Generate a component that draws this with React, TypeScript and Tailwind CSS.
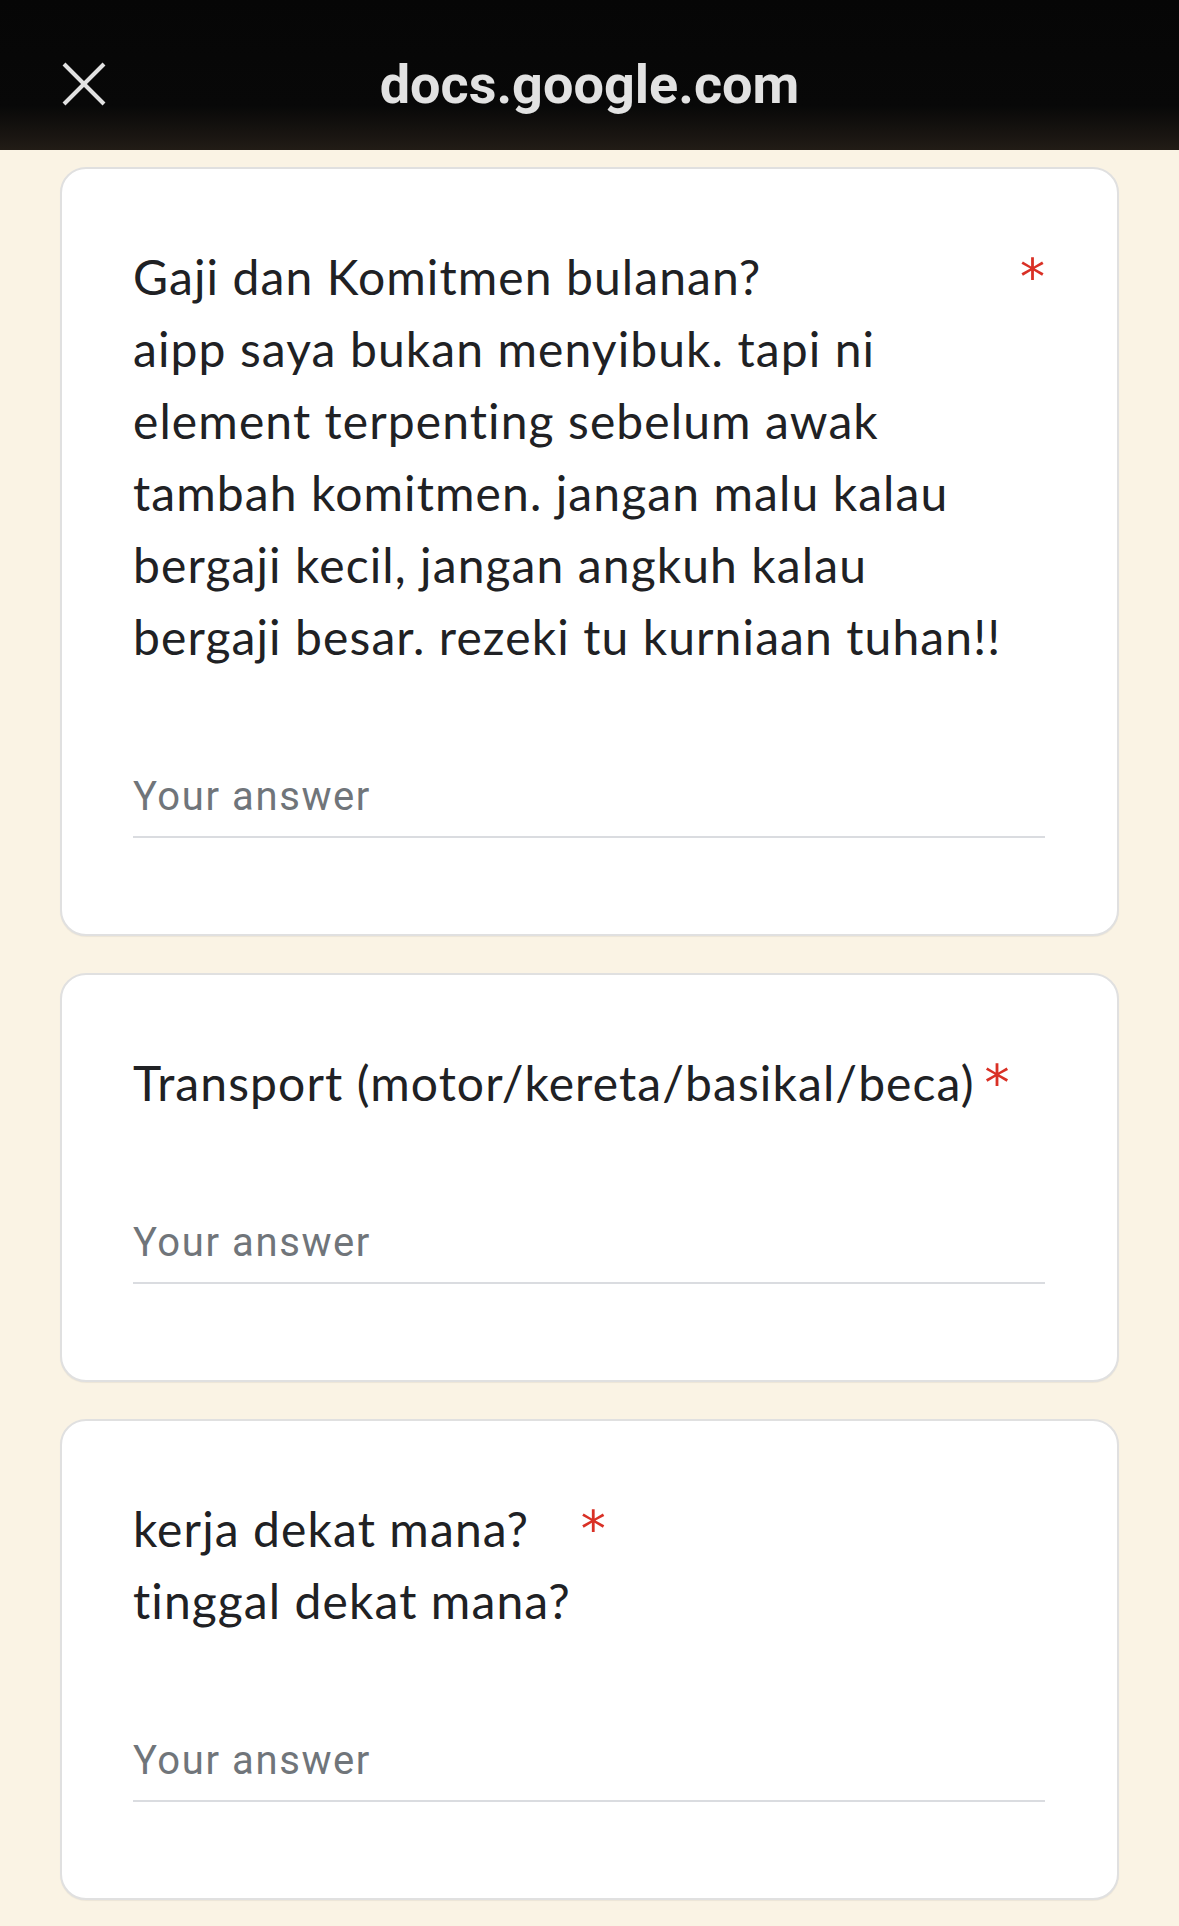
import React from "react";

const titleFont = { fontFamily: "Lato, 'Noto Sans', sans-serif" };

function Card({
  lines,
  spread,
}: {
  lines: string[];
  spread?: boolean;
}) {
  return (
    <div className="rounded-[26px] border-2 border-[#e0e0e0] bg-white pl-[71px] pr-[72px] pt-[72px] pb-[96px] shadow-[0_1px_1px_rgba(0,0,0,0.06)]">
      <div className={spread ? "flex items-start justify-between" : "flex items-start"}>
        <div
          className="text-[48px] leading-[72px] tracking-[1.1px] text-[#202124] [font-variant-ligatures:none]"
          style={titleFont}
        >
          {lines.map((l, i) => (
            <div key={i} className="whitespace-nowrap">
              {l}
            </div>
          ))}
        </div>
        <span
          className="ml-[10px] text-[50px] leading-[72px] text-[#d93025]"
          style={{ fontFamily: "'DejaVu Sans', sans-serif" }}
        >
          *
        </span>
      </div>
      <div
        className="mt-[100px] border-b-2 border-[#dadce0] pb-[15px] text-[40px] leading-[48px] tracking-[1.6px] text-[#70757a]"
        style={{ fontFamily: "Roboto, 'Liberation Sans', sans-serif" }}
      >
        Your answer
      </div>
    </div>
  );
}

export default function App() {
  return (
    <div className="min-h-[1926px] w-[1179px] bg-[#faf3e4]">
      <header className="h-[150px] bg-gradient-to-b from-[#060606] via-[#080808] via-70% to-[#221c16] px-[62px] pt-[55px]">
        <div className="grid h-[60px] grid-cols-[1fr_auto_1fr] items-start">
          <div className="pt-[7px]">
            <svg width="44" height="44" viewBox="0 0 44 44" fill="none">
              <line x1="2" y1="2" x2="42" y2="42" stroke="#e2e2e2" strokeWidth="4" />
              <line x1="42" y1="2" x2="2" y2="42" stroke="#e2e2e2" strokeWidth="4" />
            </svg>
          </div>
          <div
            className="text-[54px] font-bold leading-[60px] text-[#e2e2e2]"
            style={{ fontFamily: "Roboto, 'Liberation Sans', sans-serif" }}
          >
            docs.google.com
          </div>
          <div />
        </div>
      </header>
      <main className="flex flex-col gap-[37px] px-[60px] pt-[17px] pb-[30px]">
        <Card
          spread
          lines={[
            "Gaji dan Komitmen bulanan?",
            "aipp saya bukan menyibuk. tapi ni",
            "element terpenting sebelum awak",
            "tambah komitmen. jangan malu kalau",
            "bergaji kecil, jangan angkuh kalau",
            "bergaji besar. rezeki tu kurniaan tuhan!!",
          ]}
        />
        <Card lines={["Transport (motor/kereta/basikal/beca)"]} />
        <Card lines={["kerja dekat mana?", "tinggal dekat mana?"]} />
      </main>
    </div>
  );
}
